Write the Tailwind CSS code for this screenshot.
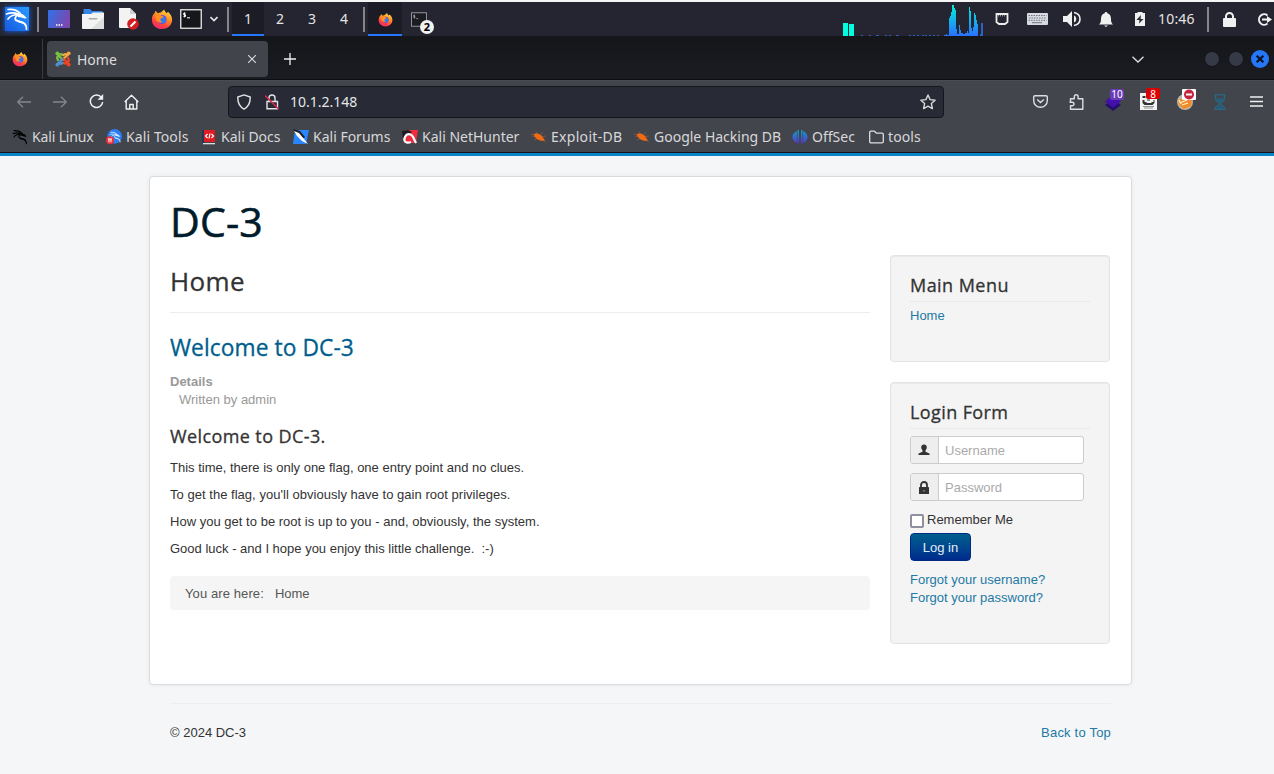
<!DOCTYPE html>
<html lang="en">

<head>
    <meta charset="UTF-8">
    <meta name="viewport" content="width=device-width, initial-scale=1.0">
    <title>Home</title>
    <script src="https://cdn.jsdelivr.net/npm/@tailwindcss/browser@4"></script>
</head>

<body class="h-screen overflow-hidden bg-[#f4f6f8] font-['Liberation_Sans',Arial,sans-serif] text-[13px] leading-[18px] text-[#333]">
    <!-- shared icons -->
    <svg class="absolute size-0">
        <defs>
            <linearGradient id="ffBody" x1="0.8" y1="0" x2="0.3" y2="1">
                <stop offset="0" stop-color="#ffe24a" />
                <stop offset="0.4" stop-color="#ff9324" />
                <stop offset="0.75" stop-color="#ff4040" />
                <stop offset="1" stop-color="#f02a78" />
            </linearGradient>
            <linearGradient id="kaliBlue" x1="0" y1="1" x2="1" y2="0">
                <stop offset="0" stop-color="#1659e0" />
                <stop offset="1" stop-color="#2a9aff" />
            </linearGradient>
            <linearGradient id="deskBg" x1="0" y1="0" x2="1" y2="0.3">
                <stop offset="0" stop-color="#2f72e8" />
                <stop offset="1" stop-color="#7a48b0" />
            </linearGradient>
            <linearGradient id="netBg" x1="0" y1="0" x2="0" y2="1">
                <stop offset="0" stop-color="#00f0dd" />
                <stop offset="1" stop-color="#2a70ff" />
            </linearGradient>
            <linearGradient id="offBg" x1="0" y1="0" x2="0" y2="1">
                <stop offset="0" stop-color="#0fa2c8" />
                <stop offset="1" stop-color="#5a30d8" />
            </linearGradient>
        </defs>
        <symbol id="firefox" viewBox="0 0 24 24">
            <path fill="url(#ffBody)" d="M4 5.500 5 3l2.500 2.800c1.300-.8 2-.9 3.300-1C12 3.500 13 2.500 14.500 1.500c.3 2 1.500 3 2.800 4.200L18.500 4c3 2.500 5 6 4.500 10-.7 5.200-5 9-11 9C5.500 23 1 18.500 1 12.800 1 9.500 2 7.200 4 5.500z" />
            <circle cx="12" cy="12.500" r="5" fill="#6a45e0" />
            <path fill="#3279f0" d="M9 9.500c3-2 7-.5 7.500 3 .3 2.500-1.500 4-3.500 4.300C10 17 8 14 9 9.500z" />
            <path fill="#ff8f20" d="M4.500 7.500c2.500-1 5-.6 6.500.6l3 1.500c-.5 1.500-2.500 1.300-3.600 2.200-.6 1.400.2 3 2.300 3.500-3 2-7.200-.3-7.400-3.800z" />
        </symbol>
        <symbol id="dragon" viewBox="0 0 24 24">
            <path fill="none" stroke="currentColor" stroke-linecap="round" stroke-linejoin="round" stroke-width="1.700" d="M3 2.500c4-.5 9 .5 12.500 4M1.500 7c4-1.500 8-1.500 12 0M3 12c2-3 6-4.500 11-4.500 2.500 0 4.500 1 6 3.200L17.500 10M13.500 7.500c-4 2-4.500 5.500-1 6.500 3 .8 6 1 7.800 3.200 1.200 1.600 1.300 3.300 1.200 5" />
            <path fill="currentColor" d="M12 6.500l6 1 4 3.700-5-.6-4-.6zM11 12l9 4.500 1.500 4.500-3-4-6-2z" />
        </symbol>
        <symbol id="bug" viewBox="0 0 16 16">
            <path stroke="#a8603a" stroke-width=".6" d="M1 7l5 1M5 2.500l2 4M10 5l2-1.500M9 8l6-1M3 11l4-2M10 10l5 3M0 5l4 1" />
            <path fill="#f26a12" d="M3 5c2.500-1 5-.5 7.500 1.500l1 1.500 2.500 3.500c-2.500.5-6 .3-8-1.500C4 8.500 3 7 3 5z" />
        </symbol>
        <symbol id="terminal" viewBox="0 0 22 20">
            <rect x=".75" y=".75" width="20.500" height="18.500" fill="#15171a" stroke="#e8e8e8" stroke-width="1.300" />
            <path fill="none" stroke="#fff" stroke-width="1" d="M5.500 4.200H3.700v1.600h1.800v1.700H3.500M4.600 3.400v5M7 8.800h3" />
        </symbol>
    </svg>

    <!-- desktop panel -->
    <div class="h-[2px] bg-[#f5f5f5]"></div>
    <div class="flex h-[34px] items-center bg-[#242530] font-['Noto_Sans',sans-serif] text-[14px] text-[#e4e4e4]">
        <div class="ml-[5px] flex size-6 items-center justify-center bg-[#1d7bff] text-white shadow-[0_0_5px_#1668ff]">
            <svg class="size-6" viewBox="0 0 24 24"><rect width="24" height="24" fill="url(#kaliBlue)" /><use href="#dragon" /></svg>
        </div>
        <div class="ml-2 h-[25px] w-[2px] bg-[#85858a]"></div>
        <svg class="ml-[9px] h-[18px] w-[22px]" viewBox="0 0 22 18">
            <rect width="22" height="18" rx="1" fill="url(#deskBg)" />
            <path stroke="#fff" stroke-width="1.500" d="M8 15h1.500M10.500 15H12M13 15h1.500" />
        </svg>
        <svg class="ml-3 h-5 w-[22px]" viewBox="0 0 22 20">
            <path fill="#3584e8" d="M1.500 0h6.500l2 2h10.500v6h-19z" />
            <path fill="#f3f3f3" d="M0 5h9l2-1.500h11V19a1 1 0 0 1-1 1H1a1 1 0 0 1-1-1z" />
            <path fill="#dedede" d="M22 8v12H9z" />
            <rect x="6.500" y="9" width="9" height="1.600" rx=".8" fill="#aaa" />
        </svg>
        <svg class="ml-[15px] h-[22px] w-5" viewBox="0 0 20 22">
            <path fill="#f3f3f3" d="M0 0h11l6 6v14H1a1 1 0 0 1-1-1z" />
            <path fill="#cfcfcf" d="M11 0l6 6h-6z" />
            <circle cx="14" cy="16" r="5.800" fill="#d21f24" />
            <path stroke="#fff" stroke-width="2" d="M11.500 18.500l5-5" />
        </svg>
        <svg class="ml-3 size-[22px]"><use href="#firefox" /></svg>
        <svg class="ml-[7px] h-5 w-[22px]"><use href="#terminal" /></svg>
        <svg class="ml-2 h-[6px] w-2" viewBox="0 0 8 6"><path fill="none" stroke="#e8e8e8" stroke-width="1.600" d="M.5 1 4 4.500 7.500 1" /></svg>
        <div class="ml-[9px] h-[25px] w-[2px] bg-[#85858a]"></div>
        <div class="ml-[3px] flex h-full w-8 items-center justify-center border-b-2 border-[#2777ff] bg-[#1b1c25] pt-[2px]">1</div>
        <div class="w-8 text-center">2</div>
        <div class="w-8 text-center">3</div>
        <div class="w-8 text-center">4</div>
        <div class="ml-[3px] h-[25px] w-[2px] bg-[#85858a]"></div>
        <div class="ml-[3px] flex h-full w-[34px] items-center justify-center border-b-2 border-[#2777ff] bg-[#1b1c25]">
            <svg class="mt-[2px] size-[15px]"><use href="#firefox" /></svg>
        </div>
        <div class="relative ml-[9px]">
            <svg class="h-[15px] w-4 opacity-60"><use href="#terminal" /></svg>
            <span class="absolute top-[8px] left-[9px] flex size-[14px] items-center justify-center rounded-full bg-[#f1f1f1] text-[11px] font-bold text-black">2</span>
        </div>

        <div class="ml-auto flex h-full items-center">
            <svg class="h-[34px] w-[141px]" viewBox="0 0 141 34">
                <path fill="#00ffe0" d="M0 21h5v13H0zM6 22h5v12H6z" />
                <path stroke="#2f5fb5" d="M18 33.500h2M26 33.500h2M33 33.500h3M42 33.500h2M46 33.500h2M53 33.500h3M66 33.500h2M70 33.500h2M74 33.500h2M79 33.500h2M82 33.500h2M86 33.500h2M90 33.500h2M94 33.500h2" />
                <path fill="url(#netBg)" d="M101 34v-1h2v-1h1v1h2V16h1v-2h1v-4h1V3h2v3h1v2h1v19h1v5h2v-9h1v5h1v3h2v1h2v-1h2v-2h1v2h1V5h1v4h1v17h1v3h1v-4h1V11h1v2h1v5h1v4h1v12z" />
                <path fill="#2a62c8" d="M137 32h1V21h2v13h-3z" />
            </svg>
            <svg class="ml-[11px] h-3 w-[14px]" viewBox="0 0 14 12">
                <path fill="none" stroke="#ececec" stroke-width="1.800" d="M1.500 1h11v8l-2.500 2H4L1.500 9z" />
                <path stroke="#bbb" stroke-dasharray="1 1" d="M3 2.800h8" />
            </svg>
            <svg class="ml-[18px] h-3 w-[21px]" viewBox="0 0 21 12">
                <rect width="21" height="12" rx="1" fill="#d8dae2" />
                <path stroke="#70737f" stroke-dasharray="1.500 1" d="M1.500 2.500h18M2 5h17M1.500 7.300h18" />
                <path stroke="#70737f" d="M5 9.700h10" />
            </svg>
            <svg class="ml-[15px] h-4 w-[18px]" viewBox="0 0 18 16">
                <path fill="#f0f0f0" d="M0 5h4l5-5v16l-5-5H0z" />
                <path fill="#f0f0f0" d="M11 4.500c3 1 3 6 0 7z" />
                <path fill="none" stroke="#f0f0f0" stroke-width="1.600" d="M11 1.500c8 1.500 8 11.500 0 13" />
            </svg>
            <svg class="ml-[18px] h-[15px] w-[14px]" viewBox="0 0 14 15">
                <path fill="#f0f0f0" d="M7 0c1 0 1.300.7 1.300 1.300C11 2 12 4 12 7c0 3 .5 4 2 5.500H0C1.500 11 2 10 2 7c0-3 1-5 3.700-5.700C5.700.7 6 0 7 0zM5 13.500h4L7 15z" />
            </svg>
            <svg class="ml-[22px] h-[14px] w-[10px]" viewBox="0 0 10 14">
                <path fill="#f0f0f0" d="M2.500 0h5v1H10v13H0V1h2.500z" />
                <path fill="#242530" d="M6 3 1.500 8H4.500L4 11.500 8.500 7H5.500z" />
            </svg>
            <span class="ml-[13px] w-[38px] tracking-[0.2px]">10:46</span>
            <div class="ml-[11px] h-[25px] w-[2px] bg-[#85858a]"></div>
            <svg class="ml-[14px] h-[15px] w-[13px]" viewBox="0 0 13 15">
                <rect y="6" width="13" height="9" rx="1" fill="#f0f0f0" />
                <path fill="none" stroke="#f0f0f0" stroke-width="2" d="M3 7V4.500a3.500 3.500 0 0 1 7 0V7" />
            </svg>
            <svg class="mr-[2px] ml-[21px] h-[13px] w-[15px]" viewBox="0 0 15 13">
                <path fill="none" stroke="#f0f0f0" stroke-width="2" d="M10.500 2.500A5.200 5.200 0 1 0 10.500 10.500" />
                <path fill="#f0f0f0" d="M5 5.500h5V3l5 3.500-5 3.500V7.500H5z" />
            </svg>
        </div>
    </div>

    <!-- tab strip -->
    <div class="flex h-[44px] items-center border-b border-[#0c0d10] bg-linear-to-b from-[#15161a] to-[#1b1c21] pt-[3px] font-['Noto_Sans',sans-serif] text-[14px] text-[#dcdcde]">
        <div class="flex h-full w-[43px] items-center border-r border-[#3b3c42]">
            <svg class="ml-3 size-4"><use href="#firefox" /></svg>
        </div>
        <div class="ml-1 flex h-9 w-[221px] items-center rounded-[4px] bg-[#42444b]">
            <svg class="ml-2 size-4" viewBox="0 0 16 16" fill="none" stroke-width="2.300" stroke-linecap="round">
                <path stroke="#7ac143" d="M3 9c-1-1.500-.8-3.500.500-4.700C5 3 6.500 3 8 4.200M4 5l4 3.800" />
                <path stroke="#f9a541" d="M8.500 4c1.300-1.200 3-1.200 4.200.200M12 4.500 8.300 8" />
                <path stroke="#f44321" d="M13 7c1 1.700.800 3.500-.500 4.700-1.300 1-2.600 1-4 .200M12 11 8.500 8" />
                <path stroke="#5091cd" d="M7.500 12c-1.300 1-2.800 1-4-.300M4 11.500 7.500 8.200" />
                <circle cx="2.300" cy="2.300" r="1.900" fill="#7ac143" />
                <circle cx="13.700" cy="2.300" r="1.900" fill="#f9a541" />
                <circle cx="13.700" cy="13.700" r="1.900" fill="#f44321" />
                <circle cx="2.300" cy="13.700" r="1.900" fill="#5091cd" />
            </svg>
            <span class="ml-[6px] pt-px">Home</span>
            <svg class="mr-3 ml-auto size-2" viewBox="0 0 8 8"><path stroke="#dcdcde" stroke-width="1.100" d="M0 0l8 8M8 0 0 8" /></svg>
        </div>
        <svg class="ml-4 size-3" viewBox="0 0 12 12"><path stroke="#f0f0f0" stroke-width="1.300" d="M6 0v12M0 6h12" /></svg>
        <svg class="ml-auto h-[7px] w-3" viewBox="0 0 12 7"><path fill="none" stroke="#e0e0e0" stroke-width="1.300" d="M.5.700 6 6 11.500.700" /></svg>
        <div class="ml-[60px] size-4 rounded-full border border-[#14151a] bg-[#363a47]"></div>
        <div class="ml-2 size-4 rounded-full border border-[#14151a] bg-[#363a47]"></div>
        <svg class="mr-[5px] ml-[7px] size-[18px]" viewBox="0 0 18 18">
            <circle cx="9" cy="9" r="9" fill="#2676f8" />
            <path stroke="#0c1220" stroke-width="2.200" d="M5.700 5.700l6.600 6.600M12.300 5.700l-6.600 6.600" />
        </svg>
    </div>

    <!-- address bar -->
    <div class="flex h-[43px] items-center border-t border-[#4a4c53] bg-[#43454c] pb-px font-['Noto_Sans',sans-serif] text-[14px] text-[#e6e6e8]">
        <svg class="ml-[17px] h-3 w-[14px]" viewBox="0 0 14 12"><path fill="none" stroke="#85868c" stroke-width="1.300" d="M14 6H1M6 .700.700 6 6 11.300" /></svg>
        <svg class="ml-[22px] h-3 w-[14px]" viewBox="0 0 14 12"><path fill="none" stroke="#85868c" stroke-width="1.300" d="M0 6h13M8 .700 13.300 6 8 11.300" /></svg>
        <svg class="ml-[22px] size-[15px]" viewBox="0 0 15 15">
            <path fill="none" stroke="#f0f0f0" stroke-width="1.500" d="M12.500 3.500A6.200 6.200 0 1 0 13.700 8" />
            <path fill="#f0f0f0" d="M14.200 0v5.700H8.500z" />
        </svg>
        <svg class="ml-[20px] h-4 w-[15px]" viewBox="0 0 15 16"><path fill="none" stroke="#f0f0f0" stroke-width="1.400" stroke-linejoin="round" d="M.700 8 7.500 1.200 14.300 8M2.200 7v8h10.600V7M5.800 15v-4.500h3.400V15" /></svg>
        <div class="ml-[89px] flex h-8 w-[716px] items-center rounded-[4px] border border-[#16171c] bg-[#282a36]">
            <svg class="ml-2 h-4 w-[14px]" viewBox="0 0 14 16"><path fill="none" stroke="#e4e4e6" stroke-width="1.400" d="M7 .900 13.200 3c.200 5.500-1 9.500-6.200 12.100C1.800 12.500.600 8.500.800 3z" /></svg>
            <svg class="ml-[14px] h-4 w-[14px]" viewBox="0 0 14 16">
                <path fill="none" stroke="#e4e4e6" stroke-width="1.400" d="M4 7V4a3 3 0 0 1 6 0v3M2 7.500h10.500v7.200H2z" />
                <path stroke="#e3264c" stroke-width="1.500" d="M0 1.500l13.500 13.500" />
            </svg>
            <span class="ml-[11px]">10.1.2.148</span>
            <svg class="mr-[7px] ml-auto size-4" viewBox="0 0 16 16"><path fill="none" stroke="#d8d8da" stroke-width="1.400" stroke-linejoin="round" d="M8 1l2.100 4.600 5 .6-3.700 3.400 1 5L8 12.200l-4.400 2.400 1-5L.900 6.200l5-.6z" /></svg>
        </div>
        <svg class="ml-auto h-[13px] w-[15px]" viewBox="0 0 15 13">
            <path fill="none" stroke="#dededf" stroke-width="1.400" d="M2 .700h11c.800 0 1.300.500 1.300 1.300v3.500c0 9-13.600 9-13.600 0V2C.700 1.200 1.200.700 2 .700zM4.200 4.500l3.300 3 3.300-3" />
        </svg>
        <svg class="ml-[21px] h-4 w-[15px]" viewBox="0 0 15 16">
            <path fill="none" stroke="#dededf" stroke-width="1.400" stroke-linejoin="round" d="M1.500 7.800V4.800h3.800V2.700a1.900 1.900 0 0 1 3.800 0v2.100h4.700v10.400H1.500v-3.400h1.700a1.800 1.800 0 0 0 0-3.600H.5" />
        </svg>
        <div class="relative ml-5">
            <svg class="size-[18px]" viewBox="0 0 18 18">
                <path fill="#23106c" d="M1 12l4-3h8l4 3-8 6z" />
                <path fill="#4310ab" d="M9 2l8 6.500-8 6-8-6z" />
            </svg>
            <span class="absolute -top-[4px] left-[6px] flex h-[11px] w-[14px] items-center justify-center rounded-[2px] bg-[#6b3cb8] text-[10px] text-white">10</span>
        </div>
        <div class="relative ml-[18px]">
            <svg class="size-[17px]" viewBox="0 0 17 17">
                <rect y="0" width="17" height="17" fill="#f3f3f3" />
                <path fill="#333" d="M2.500 3h3v2h-3zM2.500 7h2v2h2v1h5V9h2V7h1v3l-2 2h-8l-2-2zM7 6.500h3v1H7zM3 13h11v.600H3zM4 14.700h9v.600H4z" />
            </svg>
            <span class="absolute -top-[5px] left-[6px] flex h-[11px] w-[14px] items-center justify-center rounded-[2px] bg-[#dd0000] text-[10px] text-white">8</span>
        </div>
        <div class="relative ml-5">
            <svg class="size-4" viewBox="0 0 16 16">
                <circle cx="8" cy="8" r="8" fill="#bdb6aa" />
                <path fill="#f28b24" d="M1 6l10-3 4 2-1 7-7 3-5-4z" />
                <path stroke="#fff0d5" stroke-width="1.300" d="M4 8.500l6-2.500M5 11l6-2M2 6l2 4" />
            </svg>
            <svg class="absolute -top-[5px] left-[5px] h-[11px] w-[14px]" viewBox="0 0 14 11">
                <rect width="14" height="11" rx="1" fill="#fff" />
                <circle cx="7" cy="5.500" r="5" fill="#c8213e" />
                <path stroke="#fff" stroke-width="2" d="M4 5.500h6" />
            </svg>
        </div>
        <svg class="ml-[21px] h-4 w-3" viewBox="0 0 12 16">
            <path fill="none" stroke="#286883" stroke-width="1.300" d="M.500.800h11M1.500 1v3.500C1.500 7 4 7.500 5 8.500v2L1.200 14v1.300h9.600V14L7 10.500v-2c1-1 3.500-1.500 3.500-4V1" />
            <path fill="#23627f" d="M2 4.500h8L7 8H5zM6 11l3.500 4h-7z" />
        </svg>
        <svg class="mr-[11px] ml-6 h-[11px] w-[13px]" viewBox="0 0 13 11"><path stroke="#f0f0f0" stroke-width="1.300" d="M0 1h13M0 5.500h13M0 10h13" /></svg>
    </div>

    <!-- bookmarks -->
    <div class="flex h-[29px] items-center bg-[#43454c] pb-px font-['Noto_Sans',sans-serif] text-[14px] whitespace-nowrap text-[#d8d8da]">
        <div class="ml-3 flex w-[94px] items-center gap-1 tracking-[-0.15px]"><svg class="size-4 shrink-0 text-black"><use href="#dragon" /></svg>Kali Linux</div>
        <div class="flex w-[95px] items-center gap-1 tracking-[0.1px]">
            <svg class="size-4 shrink-0" viewBox="0 0 24 24">
                <circle cx="13" cy="11" r="11" fill="#2a7df5" />
                <g color="#d4e9ff" transform="translate(5 3) scale(.75)"><use href="#dragon" width="24" height="24" /></g>
                <circle cx="6" cy="17" r="6" fill="#ee3036" />
                <path stroke="#fff" stroke-width="1.500" d="M3 15h6M4.500 15v5M7.500 15v5" />
            </svg>Kali Tools
        </div>
        <div class="flex w-[92px] items-center gap-1">
            <svg class="size-4 shrink-0" viewBox="0 0 16 16">
                <path fill="#24385e" d="M1 1h3v13H1z" />
                <path fill="#e01b22" d="M3 1h11v12H3z" />
                <path fill="#ddd" d="M2 14h12v1.300H2z" />
                <path fill="none" stroke="#fff" stroke-width="1.200" d="M6.500 5 4.500 7l2 2M10.500 5l2 2-2 2M9 4.500l-1 5" />
            </svg>Kali Docs
        </div>
        <div class="flex w-[109px] items-center gap-1">
            <svg class="size-4 shrink-0" viewBox="0 0 16 16">
                <path fill="#2a86ff" d="M2 1h14l-3 14H0z" />
                <path fill="#1c1c22" d="M0 0l7 2 5 6-3 2-6-5z" />
                <path fill="#fff" d="M1 2l5 2 5 6 4 5-6-3-5-5z" />
            </svg>Kali Forums
        </div>
        <div class="flex w-[129px] items-center gap-1">
            <svg class="size-4 shrink-0" viewBox="0 0 16 16">
                <path fill="#ef2d40" d="M3 1h13l-2 13H2z" />
                <path fill="#1c1c22" d="M0 2l6-1 4 2-4 3-5 4z" />
                <path fill="none" stroke="#fff" stroke-width="2.200" d="M9 13c-5 2-8-1-6-5s7-4 9 2l2 4" />
            </svg>Kali NetHunter
        </div>
        <div class="flex w-[103px] items-center gap-1 tracking-[0.3px]"><svg class="size-4 shrink-0"><use href="#bug" /></svg>Exploit-DB</div>
        <div class="flex w-[158px] items-center gap-1"><svg class="size-4 shrink-0"><use href="#bug" /></svg>Google Hacking DB</div>
        <div class="flex w-[77px] items-center gap-1">
            <svg class="size-4 shrink-0" viewBox="0 0 16 16">
                <path fill="url(#offBg)" d="M7 1v13l-1.500 1V1.500zM4.800 2v12C-1 11-1 5 4.800 2zM9 1v13l1.500 1V1.500zM11.200 2v12C17 11 17 5 11.200 2z" />
            </svg>OffSec
        </div>
        <div class="flex items-center gap-1 tracking-[0.1px]">
            <svg class="h-4 w-[15px] shrink-0" viewBox="0 0 15 16"><path fill="none" stroke="#dedede" stroke-width="1.300" stroke-linejoin="round" d="M.700 3.500c0-.800.500-1.300 1.300-1.300h3.500l2 2H13c.800 0 1.300.500 1.300 1.300v7c0 .800-.5 1.300-1.300 1.300H2c-.8 0-1.300-.5-1.300-1.300z" /></svg>tools
        </div>
    </div>

    <!-- page -->
    <main class="h-[622px] border-t border-[#14161a]">
        <div class="h-[3px] bg-[#0a85c8]"></div>
        <div class="mt-5 ml-[149px] h-[509px] w-[983px] rounded-[4px] border border-[#dadbdc] bg-white px-5 pt-5 shadow-[0_0_5px_rgba(0,0,0,0.06)]">
            <h1 class="mb-[10px] font-['Open_Sans',sans-serif] text-[41px] leading-[48px] tracking-[0.2px] text-[#001b2a] [-webkit-text-stroke:0.6px]">DC-3</h1>
            <div class="flex gap-5">
                <div class="w-[700px]">
                    <h2 class="h-[58px] border-b border-[#eee] font-['Open_Sans',sans-serif] text-[26px] leading-[52px] tracking-[0.4px] [-webkit-text-stroke:0.3px]">Home</h2>
                    <h2 class="mt-5 font-['Open_Sans',sans-serif] text-[22.75px] leading-[30px] tracking-[0.08px] text-[#005e8d] [-webkit-text-stroke:0.3px]">Welcome to DC-3</h2>
                    <dl class="mt-[10px] text-[#999]">
                        <dt class="font-bold">Details</dt>
                        <dd class="ml-[9px]">Written by admin</dd>
                    </dl>
                    <h3 class="mt-[17px] mb-[13px] font-['Open_Sans',sans-serif] text-[18px] leading-5 tracking-[0.4px] [-webkit-text-stroke:0.3px]">Welcome to DC-3.</h3>
                    <div class="space-y-[9px]">
                        <p>This time, there is only one flag, one entry point and no clues.</p>
                        <p class="tracking-[0.03px]">To get the flag, you'll obviously have to gain root privileges.</p>
                        <p class="tracking-[0.02px]">How you get to be root is up to you - and, obviously, the system.</p>
                        <p>Good luck - and I hope you enjoy this little challenge.&nbsp; :-)</p>
                    </div>
                    <div class="mt-[18px] flex gap-[11px] rounded-[4px] bg-[#f5f5f5] px-[15px] pt-[9px] pb-[7px] text-[#555]"><span class="tracking-[0.1px]">You are here:</span><span>Home</span></div>
                </div>
                <aside class="w-[220px]">
                    <section class="h-[107px] rounded-[4px] border border-[#e3e3e3] bg-[#f4f4f4] p-[19px] shadow-[inset_0_1px_1px_rgba(0,0,0,0.05)]">
                        <h3 class="mb-[5px] h-[27px] border-b border-[#eaeaea] font-['Open_Sans',sans-serif] text-[18px] leading-5 tracking-[0.45px] [-webkit-text-stroke:0.3px]">Main Menu</h3>
                        <a href="#" class="text-[#2379a5]">Home</a>
                    </section>
                    <section class="mt-5 h-[262px] rounded-[4px] border border-[#e3e3e3] bg-[#f4f4f4] p-[19px] shadow-[inset_0_1px_1px_rgba(0,0,0,0.05)]">
                        <h3 class="mb-[7px] h-[27px] border-b border-[#eaeaea] font-['Open_Sans',sans-serif] text-[18px] leading-5 tracking-[0.4px] [-webkit-text-stroke:0.3px]">Login Form</h3>
                        <div class="flex h-7 w-[174px] overflow-hidden rounded-[3px] border border-[#ccc] bg-white">
                            <span class="flex w-7 items-center justify-center border-r border-[#ccc] bg-[#eee]">
                                <svg class="mr-[2px] size-3" viewBox="0 0 12 12"><path fill="#333" d="M6 .500c2 0 3 1.300 2.800 3.200C8.600 5 8 5.700 7.500 6.300v1.500l4 1.700V11H.500V9.500l4-1.700V6.300C4 5.700 3.400 5 3.200 3.700 3 1.800 4 .500 6 .500z" /></svg>
                            </span>
                            <input type="text" placeholder="Username" class="w-0 grow px-[6px] pt-[2px] placeholder:text-[#aaa]">
                        </div>
                        <div class="mt-[9px] flex h-7 w-[174px] overflow-hidden rounded-[3px] border border-[#ccc] bg-white">
                            <span class="flex w-7 items-center justify-center border-r border-[#ccc] bg-[#eee]">
                                <svg class="mr-[2px] h-[13px] w-[10px]" viewBox="0 0 10 13"><rect y="6" width="10" height="7" rx=".6" fill="#333" /><path fill="none" stroke="#333" stroke-width="1.800" d="M2 6.500V4a3 3 0 0 1 6 0v2.500" /><path fill="#bbb" d="M4.500 9h1v1.500h-1z" /></svg>
                            </span>
                            <input type="password" placeholder="Password" class="w-0 grow px-[6px] pt-[2px] placeholder:text-[#aaa]">
                        </div>
                        <label class="mt-[10px] flex gap-[3px]">
                            <input type="checkbox" class="mt-[3px] size-[14px] appearance-none rounded-[2px] border-2 border-[#8f8f9d] bg-white">Remember Me
                        </label>
                        <button class="mt-1 block h-7 w-[61px] rounded-[4px] border border-[#002a80] bg-linear-to-b from-[#005e8d] to-[#002a8d] pt-[2px] text-center text-[#e2edf5]">Log in</button>
                        <ul class="mt-[10px] text-[#2379a5]">
                            <li><a href="#">Forgot your username?</a></li>
                            <li><a href="#">Forgot your password?</a></li>
                        </ul>
                    </section>
                </aside>
            </div>
        </div>
        <footer class="mt-[18px] ml-[170px] flex w-[941px] justify-between border-t border-[#eceef0] pt-5">
            <p>© 2024 DC-3</p>
            <a href="#" class="tracking-[0.2px] text-[#2379a5]">Back to Top</a>
        </footer>
    </main>
</body>

</html>
